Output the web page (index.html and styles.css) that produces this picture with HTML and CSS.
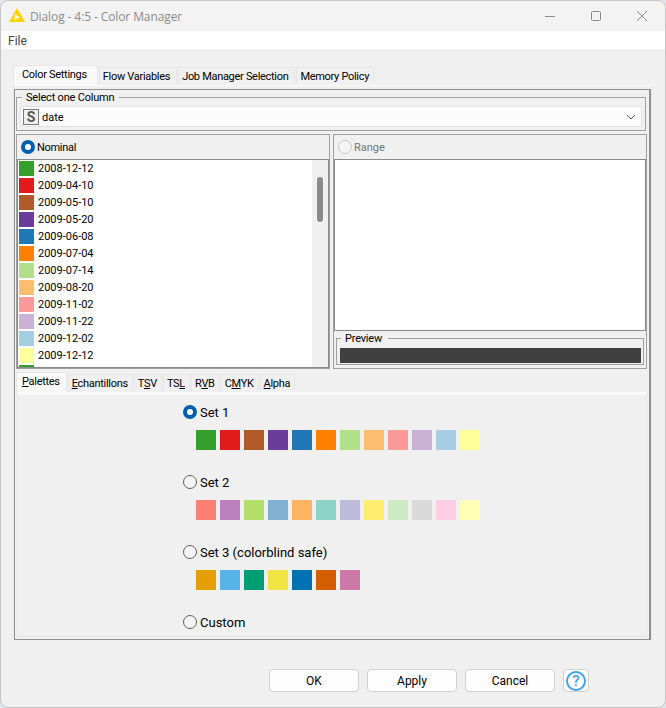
FILE: index.html
```html
<!DOCTYPE html>
<html lang="en">
<head>
  <meta charset="UTF-8" />
  <title>Dialog - 4:5 - Color Manager</title>
  <link rel="stylesheet" href="styles.css">
</head>
<body>
<div class="window">
  <div class="titlebar">
    <svg class="logo" width="16" height="16" viewBox="0 0 16 16">
      <polygon points="8,0 16,14 0,14" fill="#fdd000"/>
      <polygon points="5.5,6 5.5,12.5 11,9.2" fill="#fff8d0"/>
    </svg>
    <span class="title">Dialog - 4:5 - Color Manager</span>
    <div class="caption">
      <svg width="12" height="12" viewBox="0 0 12 12"><path d="M1 6.5h10" stroke="#8c8c8c" fill="none"/></svg>
      <svg width="12" height="12" viewBox="0 0 12 12"><rect x="1.5" y="1.5" width="9" height="9" rx="1" stroke="#8c8c8c" fill="none"/></svg>
      <svg width="12" height="12" viewBox="0 0 12 12"><path d="M1 1l10 10M11 1L1 11" stroke="#8c8c8c" fill="none"/></svg>
    </div>
  </div>
  <div class="menubar">File</div>

  <div class="content">
    <div class="tabs">
      <div class="tab active">Color Settings</div>
      <div class="tab">Flow Variables</div>
      <div class="tab">Job Manager Selection</div>
      <div class="tab last">Memory Policy</div>
    </div>
    <div class="tab-pane">
      <div class="frame">
        <fieldset class="group column-group">
          <legend>Select one Column</legend>
          <div class="combo">
            <span class="type-badge">S</span>
            <span class="combo-value">date</span>
            <svg class="chevron" width="10" height="6" viewBox="0 0 10 6"><path d="M1 1l4 4 4-4" stroke="#555" fill="none"/></svg>
          </div>
        </fieldset>

        <div class="panels">
          <div class="panel nominal">
            <div class="panel-head"><span class="radio on"></span>Nominal</div>
            <div class="list">
              <div class="list-items">
                <div class="row"><span class="chip a1"></span>2008-12-12</div>
                <div class="row"><span class="chip a2"></span>2009-04-10</div>
                <div class="row"><span class="chip a3"></span>2009-05-10</div>
                <div class="row"><span class="chip a4"></span>2009-05-20</div>
                <div class="row"><span class="chip a5"></span>2009-06-08</div>
                <div class="row"><span class="chip a6"></span>2009-07-04</div>
                <div class="row"><span class="chip a7"></span>2009-07-14</div>
                <div class="row"><span class="chip a8"></span>2009-08-20</div>
                <div class="row"><span class="chip a9"></span>2009-11-02</div>
                <div class="row"><span class="chip a10"></span>2009-11-22</div>
                <div class="row"><span class="chip a11"></span>2009-12-02</div>
                <div class="row"><span class="chip a12"></span>2009-12-12</div>
                <div class="row"><span class="chip a1"></span></div>
              </div>
              <div class="scrollbar"><div class="thumb"></div></div>
            </div>
          </div>
          <div class="panel range">
            <div class="panel-head disabled"><span class="radio off"></span>Range</div>
            <div class="range-box"></div>
            <fieldset class="group preview">
              <legend>Preview</legend>
              <div class="preview-bar"></div>
            </fieldset>
          </div>
        </div>

        <div class="tabs sub-tabs">
          <div class="tab active"><u>P</u>alettes</div>
          <div class="tab"><u>E</u>chantillons</div>
          <div class="tab">T<u>S</u>V</div>
          <div class="tab">TS<u>L</u></div>
          <div class="tab">R<u>V</u>B</div>
          <div class="tab">C<u>M</u>YK</div>
          <div class="tab"><u>A</u>lpha</div>
        </div>
        <div class="palette-pane">
          <div class="set-label"><span class="radio on"></span>Set 1</div>
          <div class="swatches">
            <span class="swatch a1"></span><span class="swatch a2"></span><span class="swatch a3"></span><span class="swatch a4"></span><span class="swatch a5"></span><span class="swatch a6"></span><span class="swatch a7"></span><span class="swatch a8"></span><span class="swatch a9"></span><span class="swatch a10"></span><span class="swatch a11"></span><span class="swatch a12"></span>
          </div>
          <div class="set-label"><span class="radio"></span>Set 2</div>
          <div class="swatches">
            <span class="swatch b1"></span><span class="swatch b2"></span><span class="swatch b3"></span><span class="swatch b4"></span><span class="swatch b5"></span><span class="swatch b6"></span><span class="swatch b7"></span><span class="swatch b8"></span><span class="swatch b9"></span><span class="swatch b10"></span><span class="swatch b11"></span><span class="swatch b12"></span>
          </div>
          <div class="set-label"><span class="radio"></span>Set 3 (colorblind safe)</div>
          <div class="swatches">
            <span class="swatch c1"></span><span class="swatch c2"></span><span class="swatch c3"></span><span class="swatch c4"></span><span class="swatch c5"></span><span class="swatch c6"></span><span class="swatch c7"></span>
          </div>
          <div class="set-label"><span class="radio"></span>Custom</div>
        </div>
      </div>
    </div>

    <div class="buttons">
      <button class="btn">OK</button>
      <button class="btn">Apply</button>
      <button class="btn">Cancel</button>
      <button class="btn help"><span class="help-icon">?</span></button>
    </div>
  </div>
</div>
</body>
</html>
```

FILE: styles.css
```css
html, body {
  margin: 0;
  height: 708px;
  overflow: hidden;
  background: #dfe6ee;
}
body {
  font-family: Roboto, "Liberation Sans", sans-serif;
  font-size: 11px;
  color: #000;
}
.window {
  box-sizing: border-box;
  width: 666px;
  height: 708px;
  display: flex;
  flex-direction: column;
  background: #f0f0f0;
  border: 1px solid #c4c4c4;
  border-radius: 8px;
  overflow: hidden;
}

/* title and menu */
.titlebar {
  flex: none;
  height: 30px;
  display: flex;
  align-items: center;
  background: #f3f3f3;
  padding-left: 8px;
}
.logo {
  margin-right: 5px;
}
.title {
  font-family: "Open Sans", sans-serif;
  font-size: 12px;
  letter-spacing: -0.1px;
  color: #8b8b8b;
}
.caption {
  margin-left: auto;
  display: flex;
  gap: 34px;
  padding-right: 17px;
}
.menubar {
  flex: none;
  height: 18px;
  line-height: 20px;
  background: #fff;
  padding-left: 7px;
  font-size: 12px;
  color: #444;
}
.content {
  flex: 1;
  padding: 16px 13px 0 12px;
}

/* tabs */
.tabs {
  display: flex;
  align-items: flex-end;
  height: 20px;
}
.tab {
  box-sizing: border-box;
  height: 18px;
  line-height: 18px;
  padding: 0 6px 0 3px;
  margin-right: 1px;
  background: #f0f0f0;
  border: 1px solid #e6e6e6;
  border-bottom: none;
  white-space: nowrap;
  letter-spacing: -0.3px;
}
.tab.active {
  height: 20px;
  line-height: 18px;
  padding: 0 10px 0 8px;
  background: #f9f9f9;
}
.tab.last {
  padding-right: 4px;
}
.tab-pane {
  box-sizing: border-box;
  height: 555px;
  padding: 3px 0 0;
  border: 1px solid #e8e8e8;
  border-top: 1px solid #f9f9f9;
}
.frame {
  box-sizing: border-box;
  height: 551px;
  width: 637px;
  border: 1px solid #8f8f8f;
  border-right-width: 2px;
  padding: 0 1px;
}

/* group boxes */
.group {
  margin: 0;
  padding: 0;
  border: 1px solid #a0a0a0;
}
.group legend {
  line-height: 13px;
  letter-spacing: -0.2px;
}
.column-group legend {
  margin-left: 2px;
  padding: 1px 5px 0 4px;
}
.column-group {
  box-sizing: border-box;
  width: 630px;
  height: 41px;
  margin: 0 0 3px;
  padding: 2px 3px 0;
}
.combo {
  box-sizing: border-box;
  height: 21px;
  display: flex;
  align-items: center;
  padding: 0 2px;
  background: #fcfcfc;
  border: 1px solid #e2e2e2;
  border-radius: 2px;
}
.combo-value {
  padding-top: 1px;
}
.type-badge {
  box-sizing: border-box;
  width: 16px;
  height: 16px;
  line-height: 14px;
  text-align: center;
  border: 1px solid #777;
  background: #f0f0f0;
  color: #555;
  font-weight: bold;
  font-size: 14px;
  margin-right: 3px;
}
.chevron {
  margin-left: auto;
  margin-right: 3px;
}

/* nominal / range */
.panels {
  display: flex;
  gap: 3px;
  height: 235px;
}
.panel {
  box-sizing: border-box;
  height: 235px;
  border: 1px solid #a0a0a0;
}
.nominal,
.range {
  width: 314px;
}
.panel-head {
  height: 24px;
  display: flex;
  align-items: center;
  gap: 2px;
  padding-left: 4px;
}
.nominal .panel-head {
  letter-spacing: -0.3px;
}
.panel-head.disabled {
  color: #777;
}
.list {
  box-sizing: border-box;
  height: 209px;
  display: flex;
  border: 1px solid #8a8a8a;
  background: #fff;
  overflow: hidden;
}
.list-items {
  flex: 1;
  overflow: hidden;
}
.row {
  height: 17px;
  display: flex;
  align-items: center;
  padding-left: 1px;
}
.chip {
  flex: none;
  width: 15px;
  height: 15px;
  margin-right: 4px;
}
.scrollbar {
  width: 16px;
  background: #f0f0f0;
  padding-top: 17px;
}
.thumb {
  width: 6px;
  height: 45px;
  margin-left: 5px;
  background: #8a8a8a;
  border-radius: 3px;
}
.range-box {
  box-sizing: border-box;
  height: 172px;
  background: #fff;
  border: 1px solid #8a8a8a;
}
.preview {
  box-sizing: border-box;
  width: 308px;
  height: 33px;
  margin: 1px 0 0 2px;
  padding: 3px 2px 0 3px;
}
.preview legend {
  margin-left: 1px;
  padding: 0 6px 0 4px;
}
.preview-bar {
  height: 15px;
  background: #404040;
}

/* palette tabs */
.sub-tabs {
  margin-top: 3px;
}
.sub-tabs .tab {
  padding: 0 4px 0 3px;
}
.sub-tabs .tab.active {
  padding: 0 6px 0 5px;
}
.palette-pane {
  box-sizing: border-box;
  width: 630px;
  height: 245px;
  margin-left: 1px;
  padding: 7px 0 0 165px;
  border: 1px solid #e6e6e6;
  border-top: 3px solid #f9f9f9;
}
.set-label {
  height: 20px;
  display: flex;
  align-items: center;
  gap: 3px;
  font-size: 13px;
}
.swatches {
  display: flex;
  gap: 4px;
  margin: 8px 0 22px 13px;
}
.swatch {
  width: 20px;
  height: 20px;
}

/* radios */
.radio {
  box-sizing: border-box;
  display: inline-block;
  width: 14px;
  height: 14px;
  border: 1px solid #5f5f5f;
  border-radius: 50%;
  background: #f4f4f4;
}
.radio.on {
  border: 4px solid #0060b0;
  background: #fff;
}
.radio.off {
  border-color: #c8c8c8;
}

/* bottom buttons */
.buttons {
  display: flex;
  gap: 8px;
  padding: 29px 0 0 256px;
}
.btn {
  box-sizing: border-box;
  width: 90px;
  height: 23px;
  padding: 0;
  font-family: inherit;
  font-size: 12px;
  background: #fdfdfd;
  border: 1px solid #d0d0d0;
  border-radius: 4px;
}
.btn.help {
  width: 26px;
  display: flex;
  align-items: center;
  justify-content: center;
}
.help-icon {
  box-sizing: border-box;
  width: 20px;
  height: 20px;
  line-height: 16px;
  border: 2px solid #3ea0f0;
  border-radius: 50%;
  color: #3ea0f0;
  font-size: 15px;
  font-weight: 500;
  text-align: center;
}

/* colours */
.a1 { background: #33a02c; }
.a2 { background: #e31a1c; }
.a3 { background: #b15928; }
.a4 { background: #6a3d9a; }
.a5 { background: #1f78b4; }
.a6 { background: #ff7f00; }
.a7 { background: #b2df8a; }
.a8 { background: #fdbf6f; }
.a9 { background: #fb9a99; }
.a10 { background: #cab2d6; }
.a11 { background: #a6cee3; }
.a12 { background: #ffff99; }
.b1 { background: #fb8072; }
.b2 { background: #bc80bd; }
.b3 { background: #b3de69; }
.b4 { background: #80b1d3; }
.b5 { background: #fdb462; }
.b6 { background: #8dd3c7; }
.b7 { background: #bebada; }
.b8 { background: #ffed6f; }
.b9 { background: #ccebc5; }
.b10 { background: #d9d9d9; }
.b11 { background: #fccde5; }
.b12 { background: #ffffb3; }
.c1 { background: #e69f00; }
.c2 { background: #56b4e9; }
.c3 { background: #009e73; }
.c4 { background: #f0e442; }
.c5 { background: #0072b2; }
.c6 { background: #d55e00; }
.c7 { background: #cc79a7; }
```
